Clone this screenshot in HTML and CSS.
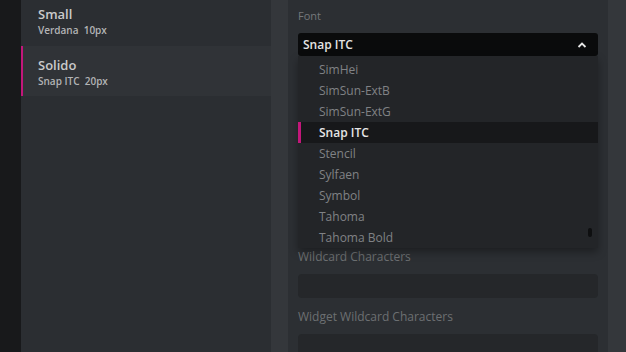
FILE: index.html
```html
<!DOCTYPE html>
<html lang="en">
<head>
    <meta charset="UTF-8">
    <meta name="viewport" content="width=device-width, initial-scale=1.0">
    <title>Font Styles</title>
    <link rel="stylesheet" href="styles.css">
</head>
<body>
    <div class="app">
        <div class="rail"></div>
        <div class="styles-list">
            <div class="style-item">
                <div class="style-name">Small</div>
                <div class="style-meta">Verdana&nbsp; 10px</div>
            </div>
            <div class="style-item active">
                <div class="style-name">Solido</div>
                <div class="style-meta">Snap ITC&nbsp; 20px</div>
            </div>
        </div>
        <div class="editor">
            <div class="panel">
                <div class="field">
                    <div class="label">Font</div>
                    <div class="select">
                        <span>Snap ITC</span>
                        <svg width="10" height="6" viewBox="0 0 10 6"><polyline points="1.5,5 5,1.5 8.5,5" fill="none" stroke="#e6e6e6" stroke-width="1.8"/></svg>
                        <div class="dropdown">
                            <div class="option">SimHei</div>
                            <div class="option">SimSun-ExtB</div>
                            <div class="option">SimSun-ExtG</div>
                            <div class="option selected">Snap ITC</div>
                            <div class="option">Stencil</div>
                            <div class="option">Sylfaen</div>
                            <div class="option">Symbol</div>
                            <div class="option">Tahoma</div>
                            <div class="option">Tahoma Bold</div>
                            <div class="scroll-thumb"></div>
                        </div>
                    </div>
                </div>
                <div class="field spaced">
                    <div class="label">Wildcard Characters</div>
                    <div class="input"></div>
                </div>
                <div class="field">
                    <div class="label">Widget Wildcard Characters</div>
                    <div class="input"></div>
                </div>
            </div>
        </div>
    </div>
</body>
</html>
```

FILE: styles.css
```css
body {
    margin: 0;
    background-color: #34373b;
    font-family: "Open Sans", "Noto Sans", sans-serif;
    overflow: hidden;
}
.app {
    display: flex;
    height: 352px;
}
.rail {
    width: 21px;
    background-color: #18191b;
}
.styles-list {
    width: 250px;
    background-color: #2b2e32;
    margin-top: -5px;
}
.style-item {
    height: 50px;
    padding-left: 15px;
    box-sizing: border-box;
    padding-top: 11px;
    border-left: 2px solid transparent;
    margin-bottom: 1px;
}
.style-item.active {
    background-color: #303337;
    border-left-color: #c2177a;
}
.style-name {
    font-size: 13px;
    font-weight: 600;
    color: #c9cacb;
    line-height: 17px;
}
.style-meta {
    font-size: 10px;
    font-weight: 600;
    color: #b3b4b6;
    line-height: 14px;
}
.editor {
    flex: 1;
    padding-left: 17px;
    padding-right: 18px;
}
.panel {
    background-color: #2c2f33;
    height: 100%;
    padding: 8px 10px 0 10px;
}
.field {
    margin-bottom: 11px;
}
.field.spaced {
    margin-top: 193px;
}
.label {
    font-size: 11px;
    color: #75787b;
    line-height: 16px;
    margin-bottom: 9px;
}
.field.spaced .label,
.field.spaced + .field .label {
    font-size: 12px;
    color: #6c6f72;
    margin-bottom: 9px;
}
.select {
    position: relative;
    height: 23px;
    background-color: #0a0b0c;
    border-radius: 3px;
    display: flex;
    align-items: center;
    justify-content: space-between;
    padding: 0 11px 0 5px;
    font-size: 12px;
    font-weight: 600;
    color: #e4e4e4;
}
.dropdown {
    position: absolute;
    left: 0;
    right: 0;
    top: 23px;
    background-color: #232528;
    padding-top: 3px;
    box-shadow: 0 4px 8px rgba(0, 0, 0, 0.35);
    z-index: 2;
}
.option {
    height: 21px;
    line-height: 21px;
    padding-left: 21px;
    font-size: 12px;
    font-weight: 500;
    color: #808285;
}
.option.selected {
    background-color: #17181a;
    color: #e6e6e6;
    font-weight: 600;
    box-shadow: inset 3px 0 0 #c2177a;
}
.scroll-thumb {
    position: absolute;
    right: 6px;
    bottom: 11px;
    width: 4px;
    height: 9px;
    border-radius: 2px;
    background-color: #0e0f10;
}
.input {
    height: 24px;
    background-color: #25272a;
    border-radius: 4px;
}
```
